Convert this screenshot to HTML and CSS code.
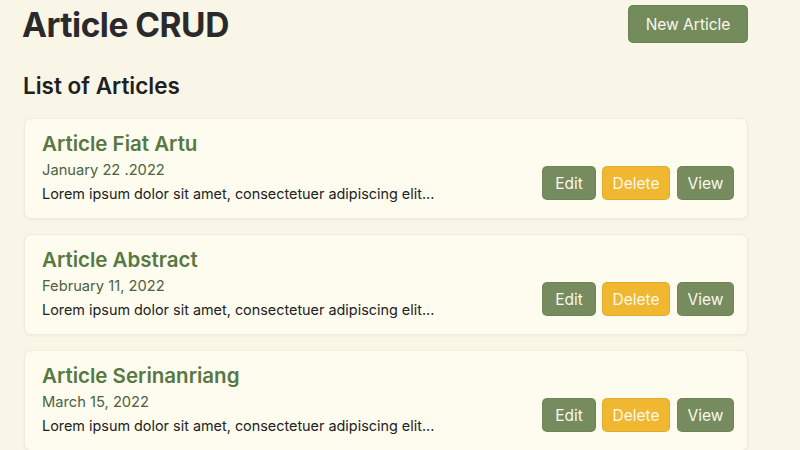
FILE: index.html
```html
<!DOCTYPE html>
<html lang="en">
<head>
<meta charset="utf-8">
<title>Article CRUD</title>
<link rel="stylesheet" href="styles.css">
</head>
<body>
<div class="page">
  <header class="header">
    <h1 class="title">Article CRUD</h1>
    <button class="btn btn-new">New Article</button>
  </header>
  <h2 class="subtitle">List of Articles</h2>
  <div class="list">
    <div class="card">
      <div class="card-body">
        <h3 class="card-title">Article Fiat Artu</h3>
        <div class="card-date">January 22 .2022</div>
        <p class="card-text">Lorem ipsum dolor sit amet, consectetuer adipiscing elit...</p>
      </div>
      <div class="actions">
        <button class="btn btn-green btn-edit">Edit</button>
        <button class="btn btn-yellow btn-delete">Delete</button>
        <button class="btn btn-green btn-view">View</button>
      </div>
    </div>
    <div class="card">
      <div class="card-body">
        <h3 class="card-title">Article Abstract</h3>
        <div class="card-date">February 11, 2022</div>
        <p class="card-text">Lorem ipsum dolor sit amet, consectetuer adipiscing elit...</p>
      </div>
      <div class="actions">
        <button class="btn btn-green btn-edit">Edit</button>
        <button class="btn btn-yellow btn-delete">Delete</button>
        <button class="btn btn-green btn-view">View</button>
      </div>
    </div>
    <div class="card">
      <div class="card-body">
        <h3 class="card-title">Article Serinanriang</h3>
        <div class="card-date">March 15, 2022</div>
        <p class="card-text">Lorem ipsum dolor sit amet, consectetuer adipiscing elit...</p>
      </div>
      <div class="actions">
        <button class="btn btn-green btn-edit">Edit</button>
        <button class="btn btn-yellow btn-delete">Delete</button>
        <button class="btn btn-green btn-view">View</button>
      </div>
    </div>
  </div>
</div>
</body>
</html>
```
FILE: styles.css
```css
* { box-sizing: border-box; }
html, body {
  margin: 0;
  background: #f9f6e7;
  font-family: Inter, "Noto Sans", sans-serif;
  color: #222;
  overflow: hidden;
}
.page {
  width: 724px;
  margin-left: 24px;
}
.header {
  display: flex;
  justify-content: space-between;
  align-items: center;
  padding-top: 4px;
  height: 46px;
}
.title {
  margin: 0 0 0 -2px;
  font-size: 33.5px;
  line-height: 40px;
  font-weight: 700;
  letter-spacing: -0.5px;
  color: #2a2a2a;
}
.subtitle {
  margin: 28px 0 20px -1px;
  font-size: 22.5px;
  line-height: 24px;
  font-weight: 600;
  color: #1f1f1f;
}
.btn {
  font-family: Inter, "Noto Sans", sans-serif;
  border: 1px solid rgba(0,0,0,0.06);
  border-radius: 5px;
  color: #fbf8ee;
  font-size: 15px;
  padding: 0;
  cursor: pointer;
}
.btn-new {
  height: 38px;
  width: 120px;
  background: #748b5c;
  font-size: 15.5px;
  margin-top: -2px;
}
.list {
  display: flex;
  flex-direction: column;
  gap: 15px;
}
.card {
  display: flex;
  justify-content: space-between;
  align-items: flex-end;
  height: 101px;
  padding: 14px 13px 14px 17px;
  background: #fdfcef;
  border: 1px solid #efecdb;
  border-radius: 7px;
  box-shadow: 0 1px 3px rgba(120, 110, 70, 0.08);
}
.card-title {
  margin: 1px 0 3px 0;
  font-size: 20.5px;
  line-height: 24px;
  font-weight: 600;
  color: #587842;
}
.card-date {
  font-size: 14.7px;
  line-height: 22px;
  color: #4d6140;
}
.card-text {
  margin: 3px 0 0 0;
  font-size: 14.4px;
  line-height: 20px;
  color: #222;
}
.actions {
  display: flex;
  gap: 6px;
  margin-bottom: 4px;
}
.actions .btn {
  height: 34px;
  font-size: 15.5px;
}
.btn-edit { width: 54px; }
.btn-delete { width: 68px; }
.btn-view { width: 57px; margin-left: 1px; }
.btn-green { background: #768c5f; }
.btn-yellow { background: #f0b731; }
```
